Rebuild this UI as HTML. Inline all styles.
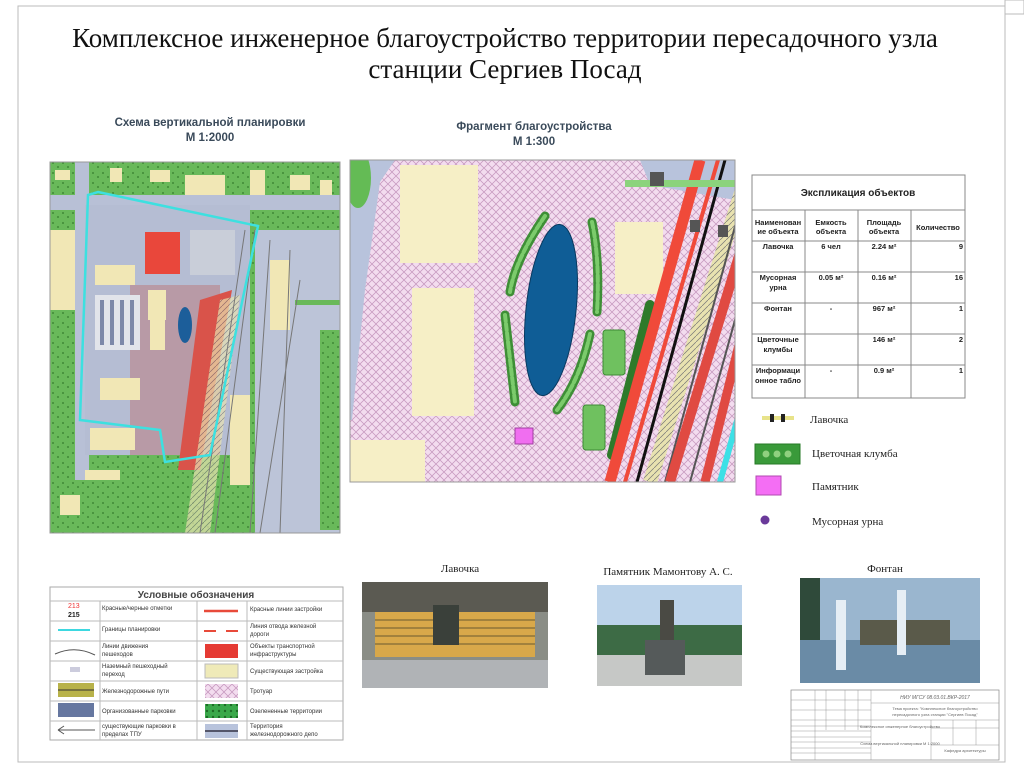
<!DOCTYPE html>
<html><head><meta charset="utf-8"><style>
html,body{margin:0;padding:0;background:#fff;}
svg{display:block;}
.s{font-family:"Liberation Serif","DejaVu Serif",serif;}
.a{font-family:"Liberation Sans","DejaVu Sans",sans-serif;}
</style></head><body>
<svg width="1024" height="767" viewBox="0 0 1024 767" xmlns="http://www.w3.org/2000/svg">
<defs>
<pattern id="pav" width="8" height="8" patternUnits="userSpaceOnUse">
<rect width="8" height="8" fill="#f3dcef"/>
<path d="M0 4 L4 0 M4 8 L8 4 M0 4 L4 8 M4 0 L8 4" stroke="#c79ac0" stroke-width="0.8" fill="none"/>
</pattern>
<pattern id="grn" width="10" height="10" patternUnits="userSpaceOnUse">
<rect width="10" height="10" fill="#69b95a"/><circle cx="3" cy="3" r="1" fill="#3f8a36"/><circle cx="8" cy="7" r="1" fill="#3f8a36"/>
</pattern>
<pattern id="rail" width="6" height="6" patternUnits="userSpaceOnUse">
<rect width="6" height="6" fill="#e8e2b0"/><path d="M0 6 L6 0" stroke="#777" stroke-width="0.7"/>
</pattern>
<pattern id="dots" width="6" height="6" patternUnits="userSpaceOnUse">
<rect width="6" height="6" fill="#3aa84a"/><circle cx="3" cy="3" r="1.2" fill="#1d6b25"/>
</pattern>
<clipPath id="c1"><rect x="50" y="162" width="290" height="371"/></clipPath>
<clipPath id="c2"><rect x="350" y="160" width="385" height="322"/></clipPath>
</defs>

<rect x="18" y="6" width="987" height="756" fill="none" stroke="#bbb" stroke-width="1"/>
<rect x="1005" y="0" width="19" height="14" fill="none" stroke="#bbb"/>

<text class="s" x="505" y="47" font-size="27" text-anchor="middle" fill="#111">Комплексное инженерное благоустройство территории пересадочного узла</text>
<text class="s" x="505" y="78" font-size="27" text-anchor="middle" fill="#111">станции Сергиев Посад</text>
<text class="a" x="210" y="126" font-size="11.5" font-weight="bold" text-anchor="middle" fill="#3a4a5a">Схема вертикальной планировки</text>
<text class="a" x="210" y="141" font-size="11.5" font-weight="bold" text-anchor="middle" fill="#3a4a5a">М 1:2000</text>
<text class="a" x="534" y="130" font-size="11.5" font-weight="bold" text-anchor="middle" fill="#3a4a5a">Фрагмент благоустройства</text>
<text class="a" x="534" y="145" font-size="11.5" font-weight="bold" text-anchor="middle" fill="#3a4a5a">М 1:300</text>

<!-- Left map -->
<g clip-path="url(#c1)">
<rect x="50" y="162" width="290" height="371" fill="url(#grn)"/>
<rect x="55" y="170" width="15" height="10" fill="#f1e7b5"/><rect x="110" y="168" width="12" height="14" fill="#f1e7b5"/><rect x="150" y="170" width="20" height="12" fill="#f1e7b5"/>
<rect x="250" y="170" width="15" height="25" fill="#f1e7b5"/><rect x="290" y="175" width="20" height="15" fill="#f1e7b5"/><rect x="320" y="180" width="12" height="25" fill="#f1e7b5"/>
<rect x="50" y="195" width="290" height="15" fill="#b8c0d6"/>
<rect x="75" y="160" width="14" height="380" fill="#b8c0d6"/>
<rect x="85" y="205" width="165" height="250" fill="#b5bdd3"/>
<rect x="255" y="230" width="85" height="310" fill="#bcc4d8"/>
<rect x="50" y="230" width="25" height="80" fill="#f1e7b5"/>
<rect x="185" y="175" width="40" height="20" fill="#f1e7b5"/>
<rect x="145" y="232" width="35" height="42" fill="#e9473b"/>
<rect x="190" y="230" width="45" height="45" fill="#c9ced9"/>
<rect x="130" y="285" width="90" height="170" fill="#b89aa6"/>
<ellipse cx="185" cy="325" rx="7" ry="18" fill="#1c5e9a"/>
<rect x="95" y="295" width="45" height="55" fill="#e2e4ea"/>
<rect x="100" y="300" width="4" height="45" fill="#7d88a8"/><rect x="110" y="300" width="4" height="45" fill="#7d88a8"/><rect x="120" y="300" width="4" height="45" fill="#7d88a8"/><rect x="130" y="300" width="4" height="45" fill="#7d88a8"/>
<rect x="148" y="290" width="18" height="30" fill="#f1e7b5"/>
<rect x="150" y="320" width="15" height="30" fill="#f1e7b5"/>
<rect x="95" y="290" width="0" height="0"/>
<rect x="95" y="265" width="40" height="20" fill="#f1e7b5"/>
<rect x="100" y="378" width="40" height="22" fill="#f1e7b5"/>
<rect x="90" y="428" width="45" height="22" fill="#f1e7b5"/>
<rect x="270" y="260" width="20" height="70" fill="#f1e7b5"/>
<rect x="230" y="395" width="20" height="90" fill="#f1e7b5"/>
<rect x="295" y="300" width="45" height="5" fill="#69b95a"/>
<rect x="320" y="330" width="20" height="200" fill="url(#grn)"/>
<polygon points="200,300 232,290 200,470 178,470" fill="#d9534a"/>
<polygon points="220,300 240,295 210,533 185,533" fill="url(#rail)" opacity="0.7"/>
<path d="M245 230 L200 533 M255 230 L215 533 M270 240 L250 533 M290 250 L280 533 M300 280 L260 533" stroke="#777" stroke-width="1" fill="none"/>
<rect x="85" y="470" width="35" height="30" fill="#f1e7b5"/>
<rect x="50" y="480" width="130" height="53" fill="url(#grn)"/>
<rect x="60" y="495" width="20" height="20" fill="#f1e7b5"/>
<path d="M98 192 L258 226 L210 455 L165 462 L160 430 L80 420 L88 195 Z" fill="none" stroke="#3de0e0" stroke-width="2.5"/>
</g>
<rect x="50" y="162" width="290" height="371" fill="none" stroke="#999"/>

<!-- Middle map -->
<g clip-path="url(#c2)">
<rect x="350" y="160" width="385" height="322" fill="url(#pav)"/>
<path d="M350 160 L395 160 L380 182 L365 290 L352 420 L350 420 Z" fill="#b8c3dc"/>
<ellipse cx="358" cy="178" rx="13" ry="30" fill="#64bb55"/>
<rect x="400" y="165" width="78" height="98" fill="#f6efc6"/>
<rect x="412" y="288" width="62" height="128" fill="#f6efc6"/>
<rect x="350" y="440" width="75" height="42" fill="#f6efc6"/>
<rect x="615" y="222" width="48" height="72" fill="#f6efc6"/>
<path d="M640 160 L735 160 L735 200 L650 185 Z" fill="#b8c3dc"/>
<ellipse cx="551" cy="310" rx="25" ry="86" transform="rotate(6 551 310)" fill="#0f5d96" stroke="#083a60"/>
<g fill="none" stroke-linecap="round">
<path d="M545 216 Q515 260 510 292" stroke="#3e8f36" stroke-width="9"/>
<path d="M505 315 Q510 360 515 402" stroke="#3e8f36" stroke-width="9"/>
<path d="M592 222 Q600 260 597 312" stroke="#3e8f36" stroke-width="9"/>
<path d="M590 334 Q580 380 557 410" stroke="#3e8f36" stroke-width="9"/>
<path d="M545 216 Q515 260 510 292 M505 315 Q510 360 515 402 M592 222 Q600 260 597 312 M590 334 Q580 380 557 410" stroke="#7ccb6c" stroke-width="4" stroke-dasharray="6 3"/>
</g>
<rect x="603" y="330" width="22" height="45" rx="3" fill="#6fc15f" stroke="#3c8a34"/>
<rect x="583" y="405" width="22" height="45" rx="3" fill="#6fc15f" stroke="#3c8a34"/>
<path d="M650 305 L612 455" stroke="#2e7a2a" stroke-width="10" stroke-linecap="round"/>
<rect x="515" y="428" width="18" height="16" fill="#f06ef0" stroke="#a03fa0"/>
<path d="M700 160 L610 482" stroke="#f04a3a" stroke-width="11"/>
<path d="M718 160 L625 482" stroke="#f04a3a" stroke-width="4"/>
<path d="M725 160 L637 482" stroke="#111" stroke-width="3"/>
<path d="M745 180 L650 482" stroke="url(#rail)" stroke-width="14"/>
<path d="M745 190 L665 482" stroke="#555" stroke-width="2"/>
<path d="M750 220 L670 482" stroke="#e04a42" stroke-width="10"/>
<path d="M760 230 L690 482" stroke="#555" stroke-width="2"/>
<path d="M760 260 L705 482" stroke="#e04a42" stroke-width="9"/>
<path d="M765 320 L720 482" stroke="#3de0e6" stroke-width="6"/>
<rect x="625" y="180" width="110" height="7" fill="#8bd37c"/>
<rect x="650" y="172" width="14" height="14" fill="#555"/>
<rect x="690" y="220" width="10" height="12" fill="#555"/>
<rect x="718" y="225" width="10" height="12" fill="#555"/>
</g>
<rect x="350" y="160" width="385" height="322" fill="none" stroke="#999"/>

<!-- Table -->
<g class="a" font-size="7.5" fill="#222" stroke="none">
<rect x="752" y="175" width="213" height="223" fill="#fff" stroke="#888"/>
<path d="M752 210 H965 M752 241 H965 M752 272 H965 M752 303 H965 M752 334 H965 M752 365 H965 M805 210 V398 M858 210 V398 M911 210 V398" stroke="#888" fill="none"/>
<text x="858" y="196" font-size="10" font-weight="bold" text-anchor="middle">Экспликация объектов</text>
<g font-weight="bold" text-anchor="middle">
<text x="778" y="225">Наименован</text><text x="778" y="234">ие объекта</text>
<text x="831" y="225">Емкость</text><text x="831" y="234">объекта</text>
<text x="884" y="225">Площадь</text><text x="884" y="234">объекта</text>
<text x="938" y="230">Количество</text>
<text x="778" y="249">Лавочка</text><text x="831" y="249">6 чел</text><text x="884" y="249">2.24 м²</text>
<text x="778" y="280">Мусорная</text><text x="778" y="290">урна</text><text x="831" y="280">0.05 м²</text><text x="884" y="280">0.16 м²</text>
<text x="778" y="311">Фонтан</text><text x="831" y="311">-</text><text x="884" y="311">967 м²</text>
<text x="778" y="342">Цветочные</text><text x="778" y="352">клумбы</text><text x="884" y="342">146 м²</text>
<text x="778" y="373">Информаци</text><text x="778" y="383">онное табло</text><text x="831" y="373">-</text><text x="884" y="373">0.9 м²</text>
</g>
<g font-weight="bold" text-anchor="end">
<text x="963" y="249">9</text><text x="963" y="280">16</text><text x="963" y="311">1</text><text x="963" y="342">2</text><text x="963" y="373">1</text>
</g>
</g>

<!-- Right legend -->
<rect x="762" y="416" width="32" height="4" fill="#e8e38a"/>
<rect x="770" y="414" width="4" height="8" fill="#222"/><rect x="781" y="414" width="4" height="8" fill="#222"/>
<text class="s" x="810" y="423" font-size="11" fill="#222">Лавочка</text>
<rect x="755" y="444" width="45" height="20" fill="#3a9a3a" stroke="#267a26"/>
<circle cx="766" cy="454" r="3.5" fill="#8fd07f"/><circle cx="777" cy="454" r="3.5" fill="#8fd07f"/><circle cx="788" cy="454" r="3.5" fill="#8fd07f"/>
<text class="s" x="812" y="457" font-size="11" fill="#222">Цветочная клумба</text>
<rect x="756" y="476" width="25" height="19" fill="#f46ef4" stroke="#b04ab0"/>
<text class="s" x="812" y="490" font-size="11" fill="#222">Памятник</text>
<circle cx="765" cy="520" r="4.5" fill="#6a3a9a"/>
<text class="s" x="812" y="525" font-size="11" fill="#222">Мусорная урна</text>

<!-- Bottom legend -->
<g class="a" font-size="6" fill="#333">
<rect x="50" y="587" width="293" height="153" fill="#fff" stroke="#aaa"/>
<path d="M50 601 H343 M50 621 H343 M50 641 H343 M50 661 H343 M50 681 H343 M50 701 H343 M50 721 H343 M100 601 V740 M197 601 V740 M247 601 V740" stroke="#bbb" fill="none"/>
<text x="196" y="598" font-size="10" font-weight="bold" text-anchor="middle" fill="#444">Условные обозначения</text>
<text x="68" y="608" font-size="7" fill="#e33">213</text><text x="68" y="617" font-size="7" font-weight="bold" fill="#222">215</text>
<line x1="58" y1="630" x2="90" y2="630" stroke="#3dd8e0" stroke-width="2"/>
<path d="M55 654 Q75 645 95 655" stroke="#555" fill="none"/>
<rect x="70" y="667" width="10" height="5" fill="#ccd"/>
<rect x="58" y="683" width="36" height="14" fill="#b8b24a"/><line x1="58" y1="690" x2="94" y2="690" stroke="#333"/>
<rect x="58" y="703" width="36" height="14" fill="#6677a0"/>
<path d="M58 730 H95 M58 730 L64 726 M58 730 L64 734" stroke="#555" fill="none"/>
<text x="102" y="610">Красные/черные отметки</text>
<text x="102" y="631">Границы планировки</text>
<text x="102" y="648">Линии движения</text><text x="102" y="656">пешеходов</text>
<text x="102" y="668">Наземный пешеходный</text><text x="102" y="676">переход</text>
<text x="102" y="693">Железнодорожные пути</text>
<text x="102" y="713">Организованные парковки</text>
<text x="102" y="728">существующие парковки в</text><text x="102" y="736">пределах ТПУ</text>
<line x1="204" y1="611" x2="238" y2="611" stroke="#e84a3a" stroke-width="2.5"/>
<path d="M204 631 H216 M226 631 H238" stroke="#e84a3a" stroke-width="2"/>
<rect x="205" y="644" width="33" height="14" fill="#e53a33"/>
<rect x="205" y="664" width="33" height="14" fill="#efeab8" stroke="#bbb"/>
<rect x="205" y="684" width="33" height="14" fill="url(#pav)"/>
<rect x="205" y="704" width="33" height="14" fill="url(#dots)"/>
<rect x="205" y="724" width="33" height="14" fill="#b8c3dc"/><line x1="205" y1="731" x2="238" y2="731" stroke="#334" stroke-width="1.5"/>
<text x="250" y="611">Красные линии застройки</text>
<text x="250" y="628">Линия отвода железной</text><text x="250" y="636">дороги</text>
<text x="250" y="648">Объекты транспортной</text><text x="250" y="656">инфраструктуры</text>
<text x="250" y="673">Существующая застройка</text>
<text x="250" y="693">Тротуар</text>
<text x="250" y="713">Озелененные территории</text>
<text x="250" y="728">Территория</text><text x="250" y="736">железнодорожного депо</text>
</g>

<!-- Photos -->
<text class="s" x="460" y="572" font-size="11" text-anchor="middle" fill="#222">Лавочка</text>
<rect x="362" y="582" width="186" height="106" fill="#8a8d86"/>
<rect x="362" y="582" width="186" height="30" fill="#5b5a52"/>
<rect x="362" y="660" width="186" height="28" fill="#b0b3b6"/>
<rect x="375" y="612" width="160" height="45" fill="#d8a84a"/>
<path d="M375 620 H535 M375 628 H535 M375 636 H535 M375 644 H535" stroke="#6a5a30" stroke-width="1"/>
<rect x="433" y="605" width="26" height="40" fill="#3a403a"/>
<text class="s" x="668" y="575" font-size="11" text-anchor="middle" fill="#222">Памятник Мамонтову А. С.</text>
<rect x="597" y="585" width="145" height="101" fill="#bcd3ea"/>
<rect x="597" y="625" width="145" height="30" fill="#3d6b45"/>
<rect x="597" y="655" width="145" height="31" fill="#c6c8c6"/>
<rect x="645" y="640" width="40" height="35" fill="#555a5a"/>
<rect x="660" y="600" width="14" height="40" fill="#4a4a44"/>
<text class="s" x="885" y="572" font-size="11" text-anchor="middle" fill="#222">Фонтан</text>
<rect x="800" y="578" width="180" height="105" fill="#9ab6cf"/>
<rect x="800" y="578" width="20" height="80" fill="#2f4a3a"/>
<rect x="800" y="640" width="180" height="43" fill="#6a8ba6"/>
<rect x="860" y="620" width="90" height="25" fill="#5a5a4a"/>
<rect x="836" y="600" width="10" height="70" fill="#e6eef5"/>
<rect x="897" y="590" width="9" height="65" fill="#e6eef5"/>

<!-- Stamp -->
<g class="a" font-size="4" fill="#666">
<rect x="791" y="690" width="208" height="70" fill="#fff" stroke="#888" stroke-width="0.7"/>
<path d="M791 700 H871 M791 710 H871 M791 720 H999 M791 726 H871 M791 731 H871 M791 737 H871 M791 742 H871 M791 748 H871 M791 753 H871 M871 690 V760 M871 703 H999 M931 720 V760 M931 728 H999 M931 745 H999 M953 720 V745 M976 720 V745 M815 690 V760 M826 690 V730 M845 690 V730 M858 690 V730" stroke="#999" stroke-width="0.5" fill="none"/>
<text x="935" y="699" text-anchor="middle" font-style="italic" font-size="5">НИУ МГСУ 08.03.01.ВКР-2017</text>
<text x="935" y="710" text-anchor="middle">Тема проекта: "Комплексное благоустройство</text>
<text x="935" y="716" text-anchor="middle">пересадочного узла станции "Сергиев Посад"</text>
<text x="900" y="728" text-anchor="middle">Комплексное инженерное благоустройство</text>
<text x="900" y="745" text-anchor="middle">Схема вертикальной планировки М 1:2000</text>
<text x="965" y="752" text-anchor="middle">Кафедра архитектуры</text>
</g>
</svg>
</body></html>
